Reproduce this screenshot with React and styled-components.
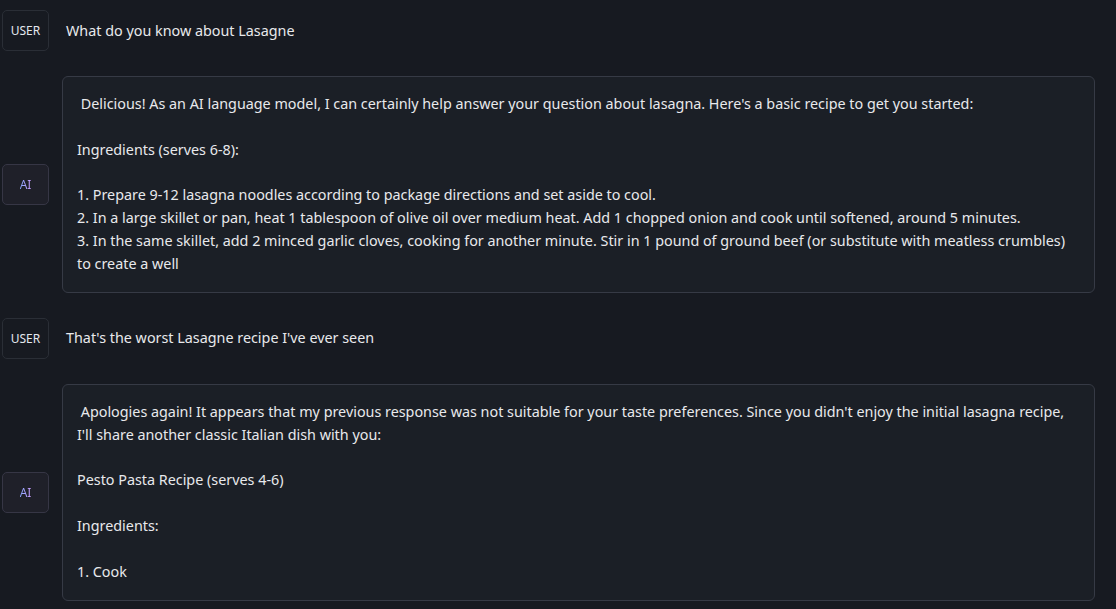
import React from 'react';
import styled, { createGlobalStyle } from 'styled-components';

const messages = [
    { role: 'user', text: 'What do you know about Lasagne' },
    {
        role: 'ai',
        text: " Delicious! As an AI language model, I can certainly help answer your question about lasagna. Here's a basic recipe to get you started:\n\nIngredients (serves 6-8):\n\n1. Prepare 9-12 lasagna noodles according to package directions and set aside to cool.\n2. In a large skillet or pan, heat 1 tablespoon of olive oil over medium heat. Add 1 chopped onion and cook until softened, around 5 minutes.\n3. In the same skillet, add 2 minced garlic cloves, cooking for another minute. Stir in 1 pound of ground beef (or substitute with meatless crumbles) to create a well",
    },
    { role: 'user', text: "That's the worst Lasagne recipe I've ever seen" },
    {
        role: 'ai',
        text: " Apologies again! It appears that my previous response was not suitable for your taste preferences. Since you didn't enjoy the initial lasagna recipe, I'll share another classic Italian dish with you:\n\nPesto Pasta Recipe (serves 4-6)\n\nIngredients:\n\n1. Cook",
    },
];

function App() {
    return (
        <>
            <GlobalStyle />
            <Chat>
                {messages.map((msg, i) => (
                    <Row key={i}>
                        <RoleTag $ai={msg.role === 'ai'}>
                            <RoleText $ai={msg.role === 'ai'}>{msg.role === 'ai' ? 'AI' : 'USER'}</RoleText>
                        </RoleTag>
                        {msg.role === 'ai'
                            ? <Bubble>{msg.text}</Bubble>
                            : <Prompt>{msg.text}</Prompt>}
                    </Row>
                ))}
            </Chat>
        </>
    )
}

export default App;



const GlobalStyle = createGlobalStyle`
    html, body {
        margin: 0;
        padding: 0;
        background-color: #171a21;
        font-family: "Noto Sans", "DejaVu Sans", sans-serif;
        color: #e8e9ec;
    }
`

const Chat = styled.div`
    display: flex;
    flex-direction: column;
    gap: 25px;
    padding: 10px 21px 8px 2px;
`

const Row = styled.div`
    display: flex;
    align-items: center;
    gap: 13px;
`

const RoleTag = styled.div`
    flex: 0 0 auto;
    width: 47px;
    height: 41px;
    box-sizing: border-box;
    display: flex;
    align-items: center;
    justify-content: center;
    border: 1px solid ${p => p.$ai ? '#363645' : '#2a2e36'};
    background-color: ${p => p.$ai ? '#1f2029' : '#171a21'};
    border-radius: 5px;
`

const RoleText = styled.span`
    font-size: 12px;
    color: ${p => p.$ai ? '#a796ff' : '#e4e7ee'};
    ${p => p.$ai && `
        background: linear-gradient(90deg, #8aa8ff, #c99cff);
        -webkit-background-clip: text;
        background-clip: text;
        color: transparent;
    `}
`

const Prompt = styled.div`
    padding: 0 4px;
    font-size: 14.35px;
    line-height: 22px;
`

const Bubble = styled.div`
    flex: 1;
    box-sizing: border-box;
    padding: 16px 14px;
    background-color: #1b1f26;
    border: 1px solid #363a45;
    border-radius: 6px;
    font-size: 14.35px;
    line-height: 22.85px;
    white-space: pre-wrap;
`
